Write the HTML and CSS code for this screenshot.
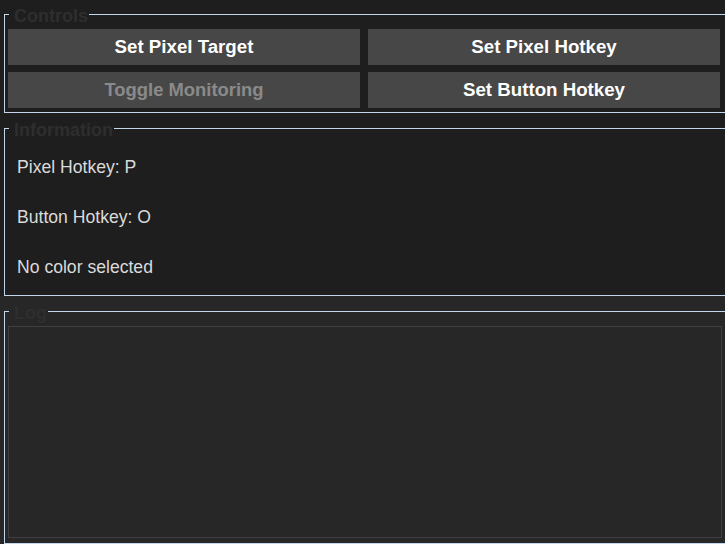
FILE: index.html
```html
<!DOCTYPE html>
<html>
<head>
<meta charset="utf-8">
<link rel="stylesheet" href="styles.css">
</head>
<body>
<div class="app">
  <fieldset class="frame controls">
    <legend class="frame-title">Controls</legend>
    <div class="button-grid">
      <button class="btn">Set Pixel Target</button>
      <button class="btn">Set Pixel Hotkey</button>
      <button class="btn btn-disabled" disabled>Toggle Monitoring</button>
      <button class="btn">Set Button Hotkey</button>
    </div>
  </fieldset>
  <fieldset class="frame info">
    <legend class="frame-title">Information</legend>
    <div class="info-list">
      <div class="info-line">Pixel Hotkey: P</div>
      <div class="info-line">Button Hotkey: O</div>
      <div class="info-line">No color selected</div>
    </div>
  </fieldset>
  <div class="log-area">
    <fieldset class="frame log">
      <legend class="frame-title">Log</legend>
      <div class="log-box"></div>
    </fieldset>
  </div>
</div>
</body>
</html>
```
FILE: styles.css
```css
html, body {
  margin: 0;
  padding: 0;
  background: #1e1e1e;
  overflow: hidden;
  height: 544px;
}
.app {
  width: 730px;
  height: 544px;
  display: flex;
  flex-direction: column;
  font-family: "Liberation Sans", Arial, sans-serif;
}
.frame {
  margin: 0 0 0 4px;
  width: 722px;
  box-sizing: border-box;
  border: 1px solid #c3d6ea;
  padding: 0 5px 0 3px;
  min-width: 0;
}
.frame-title {
  font-weight: bold;
  font-size: 18px;
  line-height: 20px;
  color: #2e2e2e;
  padding: 3px 1px 0 5px;
  margin-left: 1px;
}
.controls {
  margin-top: 3px;
  padding-top: 3px;
  padding-bottom: 4px;
}
.button-grid {
  display: grid;
  grid-template-columns: 352px 352px;
  column-gap: 8px;
  row-gap: 7px;
}
.btn {
  height: 36px;
  border: none;
  margin: 0;
  background: #474747;
  color: #ffffff;
  font-family: "Liberation Sans", Arial, sans-serif;
  font-weight: bold;
  font-size: 18.7px;
  padding: 0;
}
.btn-disabled {
  color: #8a8a8a;
  font-size: 18.4px;
}
.info {
  margin-top: 4px;
  padding-top: 0;
  height: 181px;
}
.info-list {
  display: flex;
  flex-direction: column;
  gap: 30px;
  padding: 17px 0 0 9px;
}
.info-line {
  font-size: 17.6px;
  line-height: 20px;
  color: #dadada;
}
.log-area {
  flex: 1;
  background: #272727;
  margin-top: 0;
  padding-top: 4px;
}
.log {
  height: 244px;
  padding-top: 3px;
  padding-right: 3px;
  padding-bottom: 3px;
}
.log-box {
  height: 210px;
  border: 1px solid #404040;
  background: #272727;
  margin-right: 0;
}
```
